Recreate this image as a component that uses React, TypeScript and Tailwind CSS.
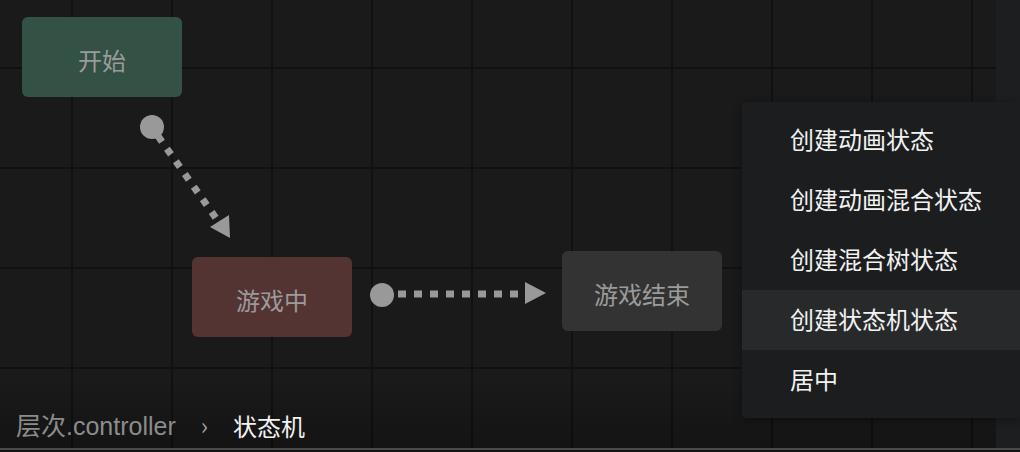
import React from 'react';

type StateNode = {
  id: string;
  label: string;
  x: number;
  y: number;
  color: string;
};

const nodes: StateNode[] = [
  { id: 'start', label: '开始', x: 22, y: 17, color: 'bg-[#345145]' },
  { id: 'playing', label: '游戏中', x: 192, y: 257, color: 'bg-[#543333]' },
  { id: 'over', label: '游戏结束', x: 562, y: 251, color: 'bg-[#333333]' },
];

const menuItems = ['创建动画状态', '创建动画混合状态', '创建混合树状态', '创建状态机状态', '居中'];

const FONT = "font-['PingFang_SC','Noto_Sans_CJK_SC',sans-serif]";

// transitions between the state nodes
const Transitions: React.FC = () => (
  <svg className="absolute inset-0 pointer-events-none" width="996" height="448">
    <g fill="#999999">
      <circle cx="152" cy="127" r="12" />
      <line
        x1="158"
        y1="136"
        x2="218"
        y2="221"
        stroke="#999999"
        strokeWidth="7"
        strokeDasharray="7 8.5"
      />
      <polygon points="230,238 210,227 229,215" />

      <circle cx="382" cy="295" r="12" />
      <line
        x1="398"
        y1="294"
        x2="524"
        y2="294"
        stroke="#999999"
        strokeWidth="7"
        strokeDasharray="8 8"
      />
      <polygon points="525,282 546,293 525,304" />
    </g>
  </svg>
);

const ContextMenu: React.FC = () => (
  <div className="absolute left-[742px] top-[102px] w-[278px] py-2 bg-[#1c1d1f] rounded-l-[4px] shadow-[0_2px_10px_rgba(0,0,0,0.35)]">
    {menuItems.map((item, i) => (
      <div
        key={item}
        className={`h-[60px] flex items-center pl-[48px] pb-[3px] text-[24px] leading-none text-[#f2f2f2] ${
          i === 3 ? 'bg-[#28292b]' : ''
        }`}
      >
        {item}
      </div>
    ))}
  </div>
);

export default function App() {
  return (
    <div className={`w-[1020px] h-[452px] flex flex-col bg-[#1a1a1a] overflow-hidden ${FONT}`}>
      <div className="flex flex-1 min-h-0">
        {/* canvas */}
        <div className="relative flex-1 bg-[#1a1a1a] bg-[linear-gradient(to_right,#111111_2px,transparent_2px),linear-gradient(to_bottom,#111111_2px,transparent_2px)] bg-size-[100px_100px] bg-position-[71px_67px]">
          <Transitions />

          {nodes.map(node => (
            <div
              key={node.id}
              className={`absolute w-[160px] h-[80px] rounded-[6px] flex items-center justify-center pt-[5px] text-[24px] leading-none text-[#9b9b9b] ${node.color}`}
              style={{ left: node.x, top: node.y }}
            >
              {node.label}
            </div>
          ))}

          {/* breadcrumb */}
          <div className="absolute left-0 right-0 bottom-0 h-[70px] bg-gradient-to-b from-transparent to-black/25 pointer-events-none" />
          <div className="absolute left-[16px] bottom-[6px] flex items-center h-[32px] text-[24px] leading-none">
            <span className="text-[#8c8c8c] text-[25px] font-['Helvetica','Liberation_Sans','Noto_Sans_CJK_SC',sans-serif]">层次.controller</span>
            <span className="text-[#a0a0a0] ml-[25px] mr-[25px] text-[24px] pb-[2px]">›</span>
            <span className="text-[#f2f2f2]">状态机</span>
          </div>
        </div>

        {/* collapsed side panel */}
        <div className="w-[24px] bg-[#1d1e20]" />
      </div>
      <div className="h-[2px] bg-[#4a4a4a]" />
      <div className="h-[2px] bg-[#141414]" />

      <ContextMenu />
    </div>
  );
}
